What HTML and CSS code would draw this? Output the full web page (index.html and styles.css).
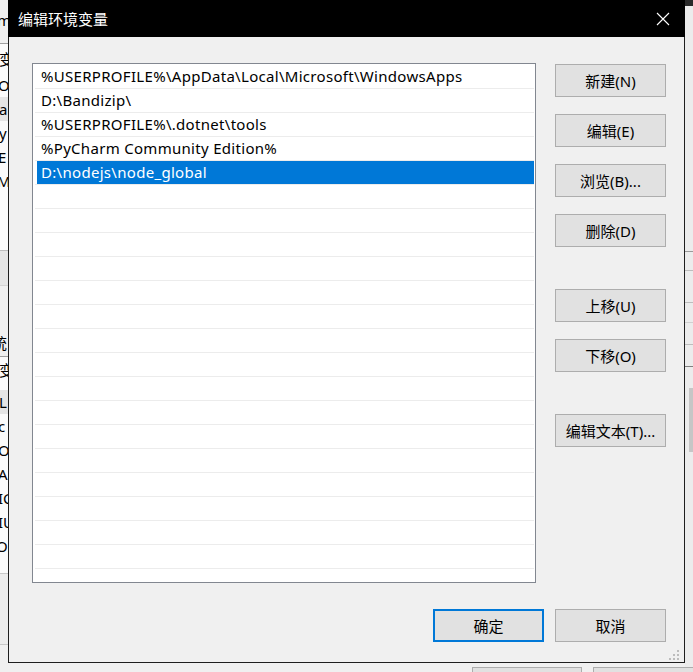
FILE: index.html
```html
<!DOCTYPE html>
<html lang="zh-CN">
<head>
<meta charset="utf-8">
<title>编辑环境变量</title>
<link rel="stylesheet" href="styles.css">
</head>
<body>
<div class="desktop">
  <div class="bg-left">
    <div class="bl-top"><span class="frag f-m">m</span></div>
    <div class="bl-list">
      <div class="bl-row bl-head"><span class="frag f-cjk">变</span></div>
      <div class="bl-row"><span class="frag f-or">Or</span></div>
      <div class="bl-row bl-sel"><span class="frag f-a">a</span></div>
      <div class="bl-row"><span class="frag f-y">y</span></div>
      <div class="bl-row"><span class="frag f-e">E</span></div>
      <div class="bl-row"><span class="frag f-mm">M</span></div>
    </div>
    <div class="bl-band"></div>
    <div class="bl-sec"><span class="frag f-sec">统</span></div>
    <div class="bl-list2">
      <div class="bl-row bl-head2"><span class="frag f-cjk">变</span></div>
      <div class="bl-row bl-sel"><span class="frag f-l">L</span></div>
      <div class="bl-row"><span class="frag f-c">c</span></div>
      <div class="bl-row"><span class="frag f-or">Or</span></div>
      <div class="bl-row"><span class="frag f-a2">A</span></div>
      <div class="bl-row"><span class="frag f-ic">IC</span></div>
      <div class="bl-row"><span class="frag f-ic">IU</span></div>
      <div class="bl-row"><span class="frag f-os">OS</span></div>
    </div>
    <div class="bl-foot"></div>
  </div>

  <div class="bg-right">
    <div class="br-top"></div>
    <div class="br-line"></div>
    <div class="br-line br-l2"></div>
    <div class="br-line br-l3"></div>
    <div class="br-line br-l4"></div>
    <div class="br-line br-l5"></div>
    <div class="br-line br-l6"></div>
    <div class="br-thumb"></div>
  </div>

  <div class="bg-bottom">
    <div class="bb-btn bb-1"></div>
    <div class="bb-btn bb-2"></div>
  </div>

  <div class="dialog">
    <div class="titlebar">
      <span class="title">编辑环境变量</span>
      <svg class="close" width="14" height="14" viewBox="0 0 14 14" aria-hidden="true">
        <path d="M1 1 L13 13 M13 1 L1 13" stroke="#fff" stroke-width="1.1" fill="none"/>
      </svg>
    </div>
    <div class="body">
      <div class="list">
        <div class="row"><span class="cell">%USERPROFILE%\AppData\Local\Microsoft\WindowsApps</span></div>
        <div class="row"><span class="cell">D:\Bandizip\</span></div>
        <div class="row"><span class="cell">%USERPROFILE%\.dotnet\tools</span></div>
        <div class="row"><span class="cell">%PyCharm Community Edition%</span></div>
        <div class="row row-selected"><span class="cell">D:\nodejs\node_global</span></div>
        <div class="row"></div>
        <div class="row"></div>
        <div class="row"></div>
        <div class="row"></div>
        <div class="row"></div>
        <div class="row"></div>
        <div class="row"></div>
        <div class="row"></div>
        <div class="row"></div>
        <div class="row"></div>
        <div class="row"></div>
        <div class="row"></div>
        <div class="row"></div>
        <div class="row"></div>
        <div class="row"></div>
        <div class="row"></div>
        <div class="row"></div>
      </div>
      <div class="side">
        <button class="btn">新建(N)</button>
        <button class="btn">编辑(E)</button>
        <button class="btn">浏览(B)...</button>
        <button class="btn">删除(D)</button>
        <button class="btn btn-group">上移(U)</button>
        <button class="btn">下移(O)</button>
        <button class="btn btn-group">编辑文本(T)...</button>
      </div>
    </div>
    <div class="footer">
      <button class="btn btn-default">确定</button>
      <button class="btn">取消</button>
    </div>
    <svg class="grip" width="12" height="12" viewBox="0 0 12 12" aria-hidden="true">
      <rect x="8" y="0" width="2" height="2" fill="#bcbcbc"/>
      <rect x="4" y="4" width="2" height="2" fill="#bcbcbc"/>
      <rect x="8" y="4" width="2" height="2" fill="#bcbcbc"/>
      <rect x="0" y="8" width="2" height="2" fill="#bcbcbc"/>
      <rect x="4" y="8" width="2" height="2" fill="#bcbcbc"/>
      <rect x="8" y="8" width="2" height="2" fill="#bcbcbc"/>
    </svg>
  </div>
</div>
</body>
</html>
```

FILE: styles.css
```css
html, body {
  margin: 0;
  padding: 0;
}

body {
  width: 693px;
  height: 672px;
  overflow: hidden;
  background: #f0f0f0;
  font-family: "Noto Sans", "Noto Sans CJK SC", sans-serif;
  font-size: 15px;
  color: #000;
}

.desktop {
  position: relative;
  width: 693px;
  height: 672px;
}

/* ---------- background window, left strip ---------- */
.bg-left {
  position: absolute;
  left: 0;
  top: 0;
  width: 8px;
  height: 672px;
  overflow: hidden;
  background: #f0f0f0;
}

.frag {
  display: block;
  white-space: nowrap;
  line-height: 24px;
  font-size: 15px;
}

.bl-top {
  height: 43px;
  border-bottom: 1px solid #a0a0a0;
}

.f-m { line-height: 40px; margin-left: -3px; }

.bl-list {
  background: #fbfbfb;
  height: 206px;
}

.bl-row {
  height: 24px;
}

.bl-head { height: 29px; }
.bl-head .frag { line-height: 30px; }

.f-cjk { margin-left: -1px; }
.f-or { margin-left: -2px; }
.f-a { margin-left: -1px; }
.f-y { margin-left: -1px; }
.f-e { margin-left: -2px; }
.f-mm { margin-left: -3px; }

.bl-sel { background: #e5e5e5; }

.bl-band {
  height: 34px;
  border-top: 1px solid #bdbdbd;
  border-bottom: 1px solid #d4d4d4;
  background: #e6e6e6;
}

.bl-sec {
  height: 70px;
  border-bottom: 1px solid #a0a0a0;
}

.f-sec { line-height: 24px; padding-top: 45px; margin-left: -8px; }

.bl-list2 {
  background: #fbfbfb;
  height: 216px;
}

.bl-head2 { height: 33px; }
.bl-head2 .frag { line-height: 26px; }

.f-l { margin-left: -1px; }
.f-c { margin-left: -2px; }
.f-a2 { margin-left: -2px; }
.f-ic { margin-left: -2px; }
.f-os { margin-left: -4px; }

.bl-foot {
  height: 70px;
  border-top: 1px solid #c8c8c8;
  border-bottom: 1px solid #c8c8c8;
  background: #ececec;
}

/* ---------- background window, right strip ---------- */
.bg-right {
  position: absolute;
  left: 685px;
  top: 0;
  width: 8px;
  height: 672px;
  overflow: hidden;
  background: #ececec;
}

.br-top {
  height: 6px;
  background: #2a2a2a;
}

.br-line {
  position: absolute;
  left: 0;
  right: 0;
  top: 251px;
  height: 1px;
  background: #9a9a9a;
}
.br-l2 { top: 270px; background: #bdbdbd; }
.br-l3 { top: 302px; background: #bdbdbd; }
.br-l4 { top: 322px; background: #d0d0d0; }
.br-l5 { top: 344px; background: #bdbdbd; }
.br-l6 { top: 366px; background: #808080; }

.br-thumb {
  position: absolute;
  left: 4px;
  width: 4px;
  top: 388px;
  height: 64px;
  background: #c6c6c6;
}

/* ---------- background window, bottom strip ---------- */
.bg-bottom {
  position: absolute;
  left: 0;
  top: 663px;
  width: 693px;
  height: 9px;
  overflow: hidden;
}

.bb-btn {
  position: absolute;
  top: 4px;
  height: 20px;
  background: #e1e1e1;
  border: 1px solid #adadad;
}
.bb-1 { left: 472px; width: 108px; }
.bb-2 { left: 593px; width: 110px; }

/* ---------- dialog ---------- */
.dialog {
  position: absolute;
  left: 8px;
  top: 0;
  width: 677px;
  height: 663px;
  box-sizing: border-box;
  background: #f0f0f0;
  border: 1px solid #1e1e1e;
  border-top: 0;
  display: flex;
  flex-direction: column;
}

.titlebar {
  height: 37px;
  margin: 0 -1px;
  background: #000;
  display: flex;
  align-items: center;
  justify-content: space-between;
  padding: 0 15px 0 10px;
  flex: none;
}

.title {
  color: #fff;
  font-size: 15px;
  line-height: 20px;
}

.close {
  display: block;
  margin-top: 1px;
}

.body {
  display: flex;
  align-items: flex-start;
  padding: 26px 18px 0 23px;
}

.list {
  box-sizing: border-box;
  width: 504px;
  height: 520px;
  border: 1px solid #828790;
  background: #fff;
  padding: 1px 1px 0 2px;
  overflow: hidden;
  flex: none;
}

.row {
  height: 23px;
  border-bottom: 1px solid #ececec;
  display: flex;
}

.cell {
  display: block;
  flex: 1;
  padding-left: 4px;
  margin-left: 2px;
  line-height: 23px;
  letter-spacing: 0.3px;
  white-space: nowrap;
}

.row-selected .cell {
  background: #0078d7;
  color: #fff;
}

.side {
  margin-left: 19px;
  padding-top: 1px;
  display: flex;
  flex-direction: column;
  gap: 17px;
}

.btn {
  box-sizing: border-box;
  width: 111px;
  height: 33px;
  margin: 0;
  padding: 0;
  background: #e1e1e1;
  border: 1px solid #adadad;
  border-radius: 0;
  font-family: "Noto Sans", "Noto Sans CJK SC", sans-serif;
  font-size: 15px;
  color: #000;
  line-height: 20px;
}

.btn-group {
  margin-top: 25px;
}

.btn-default {
  border: 2px solid #0078d7;
}

.footer {
  display: flex;
  justify-content: flex-end;
  gap: 11px;
  padding: 26px 18px 0 0;
}

.grip {
  position: absolute;
  right: 3px;
  bottom: 0;
}
```
